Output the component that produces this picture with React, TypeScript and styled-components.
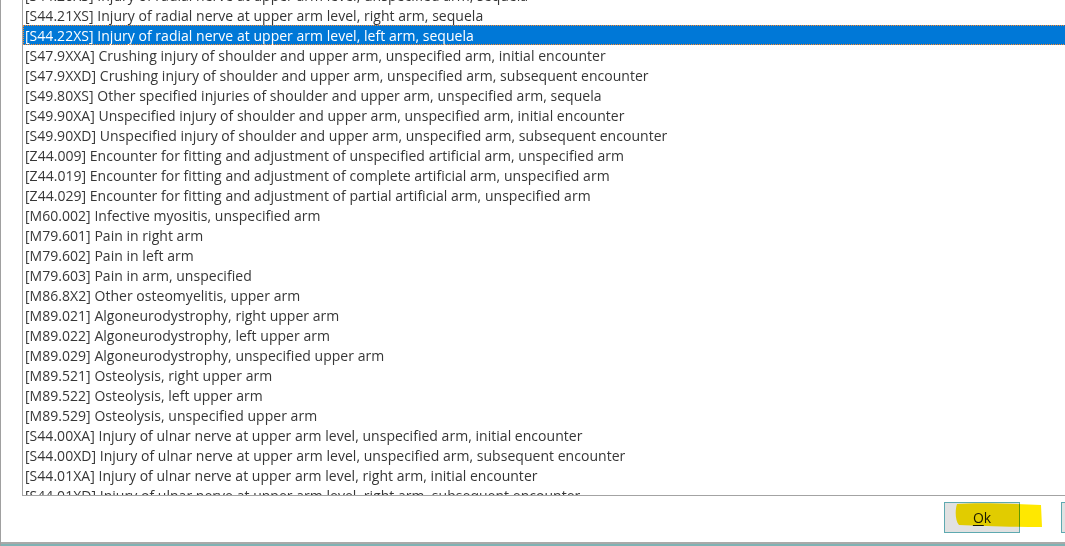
import React from "react";
import styled, { createGlobalStyle } from "styled-components";

const Global = createGlobalStyle`
  html, body { margin: 0; padding: 0; background: #ffffff; overflow: hidden; }
  body { font-family: "Open Sans", "Noto Sans", sans-serif; }
`;

const Window = styled.div`
  position: relative;
  width: 1160px;
  height: 546px;
  box-sizing: border-box;
  background: #ffffff;
  border-left: 1px solid #a0a0a0;
  display: flex;
  flex-direction: column;
`;

const Body = styled.div`
  flex: 1;
  display: flex;
  flex-direction: column;
  padding-left: 21px;
  padding-right: 23px;
`;

const ListBox = styled.div`
  height: 496px;
  box-sizing: border-box;
  border-left: 1px solid #a3a3a3;
  border-bottom: 1px solid #a3a3a3;
  border-right: 1px solid #a3a3a3;
  overflow: hidden;
`;

const Rows = styled.ul`
  list-style: none;
  margin: -15px 0 0 0;
  padding: 0;
`;

const Row = styled.li<{ $selected?: boolean }>`
  height: 20px;
  box-sizing: border-box;
  padding: 1px 0 0 2px;
  font-size: 14px;
  line-height: 19px;
  letter-spacing: 0.03px;
  white-space: nowrap;
  color: ${(p) => (p.$selected ? "#ffffff" : "#363636")};
  background: ${(p) => (p.$selected ? "#0078d7" : "transparent")};
  outline: ${(p) => (p.$selected ? "1px dotted #ff8a2a" : "none")};
  outline-offset: -1px;
`;

const Footer = styled.div`
  height: 46px;
  display: flex;
  justify-content: flex-end;
  align-items: flex-start;
  gap: 41px;
  padding-top: 6px;
  box-sizing: border-box;
`;

const Button = styled.button`
  position: relative;
  width: 76px;
  height: 31px;
  box-sizing: border-box;
  border: 1px solid #5ea9b0;
  background: #e1e1e1;
  color: #1a1a1a;
  font-family: "Open Sans", "Noto Sans", sans-serif;
  font-size: 14px;
  padding: 0;
  display: flex;
  align-items: center;
  justify-content: center;
`;

const Mnemonic = styled.span`
  text-decoration: underline;
  text-underline-offset: 2px;
`;

const BottomEdge = styled.div`
  height: 4px;
  box-sizing: border-box;
  border-top: 2px solid #a9a9a9;
  background: #7fb2b4;
`;

const Marker = styled.svg`
  position: absolute;
  left: 950px;
  top: 500px;
  width: 96px;
  height: 32px;
  mix-blend-mode: multiply;
  pointer-events: none;
`;

const items: string[] = [
  "[S44.20XS] Injury of radial nerve at upper arm level, unspecified arm, sequela",
  "[S44.21XS] Injury of radial nerve at upper arm level, right arm, sequela",
  "[S44.22XS] Injury of radial nerve at upper arm level, left arm, sequela",
  "[S47.9XXA] Crushing injury of shoulder and upper arm, unspecified arm, initial encounter",
  "[S47.9XXD] Crushing injury of shoulder and upper arm, unspecified arm, subsequent encounter",
  "[S49.80XS] Other specified injuries of shoulder and upper arm, unspecified arm, sequela",
  "[S49.90XA] Unspecified injury of shoulder and upper arm, unspecified arm, initial encounter",
  "[S49.90XD] Unspecified injury of shoulder and upper arm, unspecified arm, subsequent encounter",
  "[Z44.009] Encounter for fitting and adjustment of unspecified artificial arm, unspecified arm",
  "[Z44.019] Encounter for fitting and adjustment of complete artificial arm, unspecified arm",
  "[Z44.029] Encounter for fitting and adjustment of partial artificial arm, unspecified arm",
  "[M60.002] Infective myositis, unspecified arm",
  "[M79.601] Pain in right arm",
  "[M79.602] Pain in left arm",
  "[M79.603] Pain in arm, unspecified",
  "[M86.8X2] Other osteomyelitis, upper arm",
  "[M89.021] Algoneurodystrophy, right upper arm",
  "[M89.022] Algoneurodystrophy, left upper arm",
  "[M89.029] Algoneurodystrophy, unspecified upper arm",
  "[M89.521] Osteolysis, right upper arm",
  "[M89.522] Osteolysis, left upper arm",
  "[M89.529] Osteolysis, unspecified upper arm",
  "[S44.00XA] Injury of ulnar nerve at upper arm level, unspecified arm, initial encounter",
  "[S44.00XD] Injury of ulnar nerve at upper arm level, unspecified arm, subsequent encounter",
  "[S44.01XA] Injury of ulnar nerve at upper arm level, right arm, initial encounter",
  "[S44.01XD] Injury of ulnar nerve at upper arm level, right arm, subsequent encounter",
];

export default function App() {
  return (
    <>
      <Global />
      <Window>
        <Body>
          <ListBox>
            <Rows>
              {items.map((t, i) => (
                <Row key={t} $selected={i === 2}>
                  {t}
                </Row>
              ))}
            </Rows>
          </ListBox>
          <Footer>
            <Button>
              <Mnemonic>O</Mnemonic>k
            </Button>
            <Button>Cancel</Button>
          </Footer>
        </Body>
        <BottomEdge />
        <Marker viewBox="0 0 96 32">
          <path
            d="M6 4 C 30 2, 60 4, 90 5 L 91 27 C 60 27, 30 26, 8 25 C 4 20, 4 10, 6 4 Z"
            fill="#ffe800"
          />
        </Marker>
      </Window>
    </>
  );
}
